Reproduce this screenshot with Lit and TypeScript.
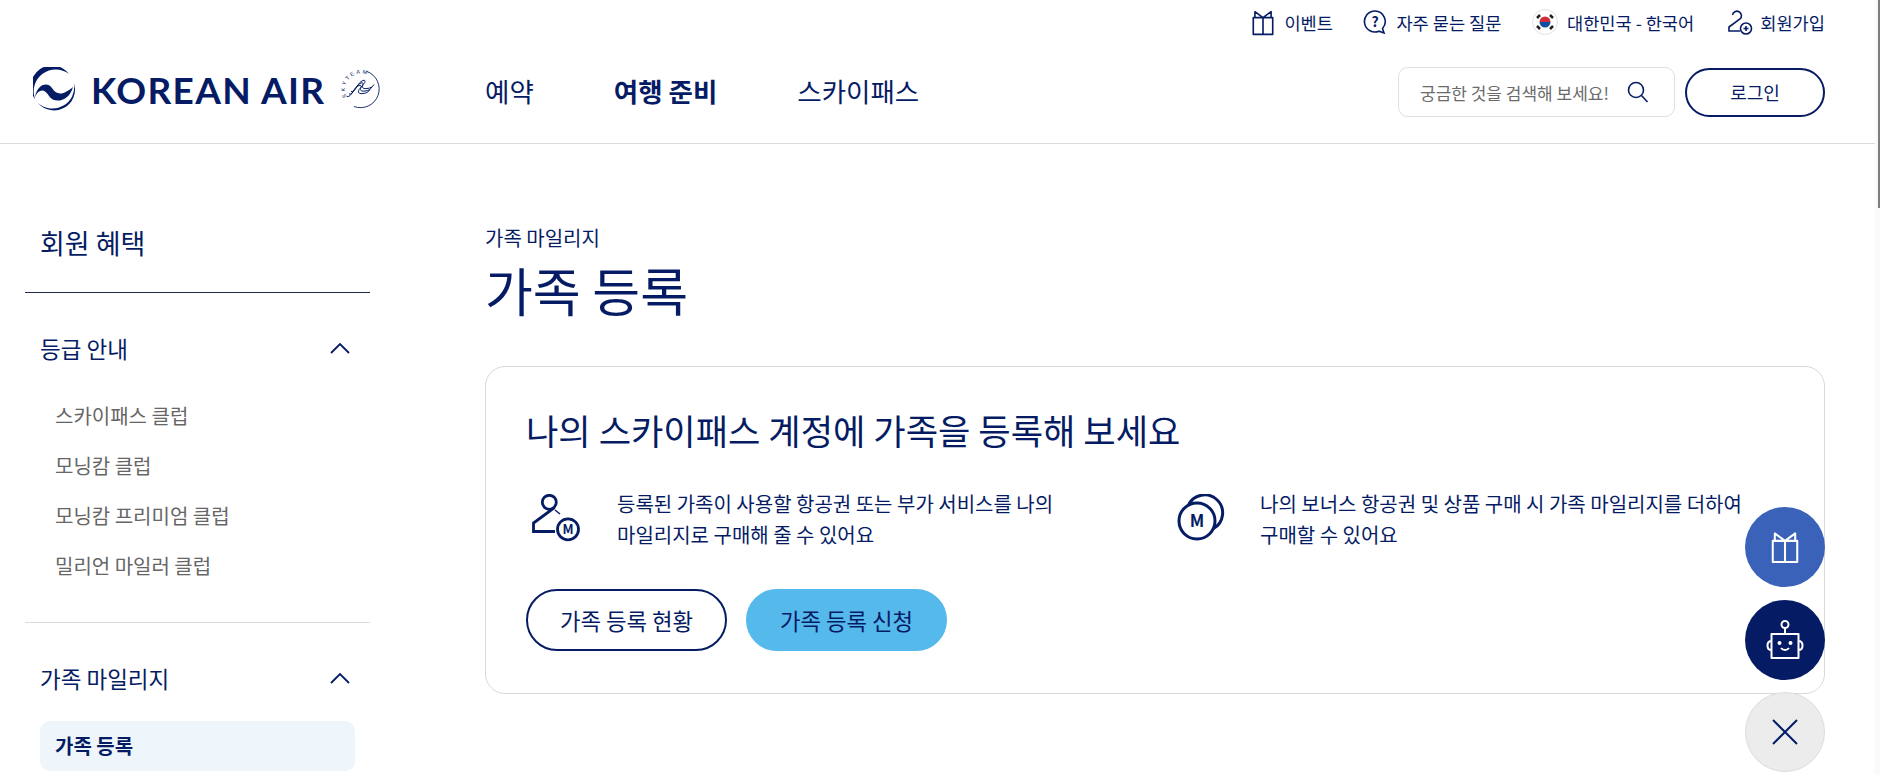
import { LitElement, html, css, svg } from 'lit';
import { customElement } from 'lit/decorators.js';

const NAVY = '#051c64';

const giftIcon = (color: string, w: number, h: number) => html`
  <svg width=${w} height=${h} viewBox="0 0 22 25" fill="none" stroke=${color} stroke-width="1.5" stroke-linejoin="round">
    <path d="M2 8h18v15.500H2zM11 8v15.500M3.500 8V2.500L11 8l7.500-5.500V8" />
  </svg>
`;

const chevron = html`
  <svg width="20" height="12" viewBox="0 0 20 12" fill="none" stroke=${NAVY} stroke-width="1.8">
    <path d="M1 11l9-9 9 9" />
  </svg>
`;

// the "2" shaped person used on the family feature
const familyPath = svg`
  <circle cx="17.300" cy="8.300" r="7" />
  <path d="M22.500 13.500 1.500 29v8.500H23" />
`;

const ribbon = svg`<path d="M9 26C14 27 15 17 21 15c2-1 3 1 1 3-2 2-3 6 3 5 3 0 6-2 7-4" stroke-width="1" />`;

@customElement('app-root')
export class AppRoot extends LitElement {
  static styles = css`
    :host {
      display: block;
      height: 775px;
      overflow: hidden;
      position: relative;
      background: #fff;
      color: #051c64;
      font-family: 'Noto Sans CJK KR', 'Noto Sans', sans-serif;
    }
    .scrollbar {
      position: absolute;
      top: 0;
      right: 0;
      width: 5px;
      height: 775px;
      background: #fafafa;
    }
    .thumb {
      position: absolute;
      top: 0;
      right: 0;
      width: 2px;
      height: 208px;
      background: #7d7d7d;
    }
    header {
      height: 143px;
      margin-right: 5px;
      border-bottom: 1px solid #dcdcdc;
      display: flex;
      flex-direction: column;
    }
    .util {
      height: 44px;
      display: flex;
      justify-content: flex-end;
      align-items: center;
      padding-right: 50px;
      gap: 33px;
      font-size: 17.6px;
    }
    .util a {
      display: flex;
      align-items: center;
      gap: 9px;
    }
    .util a.tight {
      margin-right: -2.500px;
    }
    .util a:last-child {
      gap: 7px;
    }
    .mainbar {
      flex: 1;
      display: flex;
      align-items: center;
      padding: 0 50px 0 33px;
      margin-top: -3px;
    }
    .logo {
      display: flex;
      align-items: center;
      width: 452px;
      margin-bottom: 6px;
    }
    .wordmark {
      font-family: Lato, sans-serif;
      font-weight: 700;
      font-size: 37px;
      letter-spacing: 1.300px;
      margin: 0 15px 0 16px;
      line-height: 1;
      color: #051c64;
      white-space: nowrap;
    }
    nav {
      display: flex;
      gap: 80px;
      font-size: 26.500px;
      flex: 1;
      margin-bottom: 4px;
    }
    nav b {
      font-weight: 700;
    }
    .search {
      width: 277px;
      height: 50px;
      box-sizing: border-box;
      border: 1px solid #dde0e6;
      border-radius: 10px;
      display: flex;
      align-items: center;
      justify-content: space-between;
      padding: 0 25px 0 21px;
      font-size: 17px;
      color: #6b6b6b;
    }
    .login {
      width: 140px;
      height: 49px;
      margin-left: 10px;
      box-sizing: border-box;
      border: 2px solid #051c64;
      border-radius: 25px;
      display: flex;
      align-items: center;
      justify-content: center;
      font-size: 18px;
    }
    .body {
      display: flex;
      padding: 0 55px 0 25px;
    }
    aside {
      width: 345px;
      flex: none;
      margin-right: 115px;
      padding-top: 69px;
    }
    .side-title {
      font-size: 27px;
      line-height: 60px;
      padding: 0 15px;
      border-bottom: 1px solid #222b45;
      height: 79px;
    }
    .group {
      padding: 25px 15px 0;
    }
    .group + .group {
      border-top: 1px solid #dcdcdc;
      margin-top: 31px;
    }
    .group-head {
      display: flex;
      justify-content: space-between;
      align-items: center;
      font-size: 22.500px;
      height: 60px;
      padding-right: 5px;
    }
    .sub {
      margin-top: 13px;
    }
    .sub div {
      height: 50px;
      line-height: 50px;
      padding-left: 15px;
      font-size: 20px;
      color: #666;
    }
    .sub .active {
      background: #eef6fc;
      border-radius: 10px;
      color: #051c64;
      font-weight: 700;
    }
    main {
      flex: 1;
      padding-top: 81px;
    }
    .crumb {
      font-size: 20px;
      line-height: 26px;
    }
    h1 {
      font-size: 52px;
      font-weight: 400;
      line-height: 70px;
      margin: 4px 0 41px;
    }
    .card {
      box-sizing: border-box;
      height: 328px;
      border: 1px solid #d9d9d9;
      border-radius: 20px;
      padding: 38px 40px 0;
    }
    h2 {
      font-size: 35.200px;
      font-weight: 400;
      line-height: 50px;
      margin: 0 0 33px;
    }
    .features {
      display: grid;
      grid-template-columns: 645px 1fr;
    }
    .feature {
      display: flex;
      gap: 35px;
      align-items: flex-start;
      font-size: 20px;
      line-height: 31px;
    }
    .feature svg {
      margin: 6px 0 0 6px;
      flex: none;
    }
    .actions {
      display: flex;
      gap: 19px;
      margin-top: 39px;
    }
    .btn {
      box-sizing: border-box;
      width: 201px;
      height: 62px;
      border-radius: 31px;
      border: 2px solid #051c64;
      display: flex;
      align-items: center;
      justify-content: center;
      font-size: 22.300px;
    }
    .btn.primary {
      background: #56b9ec;
      border-color: #56b9ec;
    }
    .float {
      position: absolute;
      left: 1745px;
      width: 80px;
      height: 80px;
      box-sizing: border-box;
      border-radius: 50%;
      display: flex;
      align-items: center;
      justify-content: center;
    }
    .f1 {
      top: 507px;
      background: #3a62b8;
    }
    .f2 {
      top: 600px;
      background: #051c64;
    }
    .f3 {
      top: 692px;
      background: #ececec;
      border: 1px solid #dcdcdc;
    }
  `;

  render() {
    return html`
      <header>
        <div class="util">
          <a class="tight">${giftIcon(NAVY, 24, 27)}<span>이벤트</span></a>
          <a class="tight">
            <svg width="24" height="26" viewBox="0 0 24 26" fill="none" stroke=${NAVY} stroke-width="1.6">
              <path d="M12 2a10.500 10.500 0 1 0 4 20.200l5 1.800-1.500-4.500A10.500 10.500 0 0 0 12 2z" />
              <text x="12" y="17.500" font-size="14" font-weight="700" text-anchor="middle" fill=${NAVY} stroke="none">?</text>
            </svg>
            <span>자주 묻는 질문</span>
          </a>
          <a>
            <svg width="26" height="26" viewBox="0 0 26 26">
              <circle cx="13" cy="13" r="12.500" fill="#fff" stroke="#e2e2e2" />
              <path d="M7.500 13a5.500 5.500 0 0 1 11 0z" fill="#cd2e3a" />
              <path d="M7.500 13a5.500 5.500 0 0 0 11 0z" fill="#0f4fa0" />
              <path d="M5 9l3-3M5 17l3 3M18 6l3 3M18 20l3-3" stroke="#222" stroke-width="2.500" />
            </svg>
            <span>대한민국 - 한국어</span>
          </a>
          <a>
            <svg width="26" height="26" viewBox="0 0 26 26" fill="none" stroke=${NAVY} stroke-width="1.6">
              <path d="M5.500 6A4.500 4.500 0 1 1 13 10L2 18v4h11" />
              <circle cx="19" cy="19.500" r="5.500" />
              <path d="M19 17v5M16.500 19.500h5" />
            </svg>
            <span>회원가입</span>
          </a>
        </div>
        <div class="mainbar">
          <div class="logo">
            <svg width="42" height="44" viewBox="0 0 42 44" fill=${NAVY}>
              <path d="M36 7A21 21 0 0 0 2 32A22 22 0 0 1 36 7z" />
              <path d="M5 36A21 21 0 0 0 41 16A21.800 21.800 0 0 1 5 36z" />
              <path d="M2 30C4 18 14 14 19 21 23 27 28 30 40 20 36 35 21 37 16 29 12 22 6 21 2 30z" />
            </svg>
            <span class="wordmark">KOREAN AIR</span>
            <svg width="42" height="42" viewBox="0 0 42 42" fill="none" stroke=${NAVY}>
              <path d="M27 3.500A18.500 18.500 0 0 1 14 38.500" stroke-width="0.9" />
              <path id="skyteam-arc" d="M7 29A16 16 0 0 1 34 12" stroke="none" />
              <text font-size="5.500" fill=${NAVY} stroke="none" font-family="Liberation Sans" letter-spacing="2">
                <textPath href="#skyteam-arc">SKYTEAM</textPath>
              </text>
              ${ribbon}
              <g transform="translate(-2 2.500)">${ribbon}</g>
              <g transform="translate(2 -2.500)">${ribbon}</g>
            </svg>
          </div>
          <nav>
            <span>예약</span>
            <b>여행 준비</b>
            <span>스카이패스</span>
          </nav>
          <div class="search">
            <span>궁금한 것을 검색해 보세요!</span>
            <svg width="22" height="22" viewBox="0 0 22 22" fill="none" stroke=${NAVY} stroke-width="1.6">
              <circle cx="9" cy="9" r="7.500" />
              <path d="M14.500 14.500l6 6.500" />
            </svg>
          </div>
          <div class="login">로그인</div>
        </div>
      </header>
      <div class="body">
        <aside>
          <div class="side-title">회원 혜택</div>
          <div class="group">
            <div class="group-head"><span>등급 안내</span>${chevron}</div>
            <div class="sub">
              <div>스카이패스 클럽</div>
              <div>모닝캄 클럽</div>
              <div>모닝캄 프리미엄 클럽</div>
              <div>밀리언 마일러 클럽</div>
            </div>
          </div>
          <div class="group">
            <div class="group-head"><span>가족 마일리지</span>${chevron}</div>
            <div class="sub"><div class="active">가족 등록</div></div>
          </div>
        </aside>
        <main>
          <div class="crumb">가족 마일리지</div>
          <h1>가족 등록</h1>
          <section class="card">
            <h2>나의 스카이패스 계정에 가족을 등록해 보세요</h2>
            <div class="features">
              <div class="feature">
                <svg width="50" height="50" viewBox="0 0 50 50" fill="none" stroke=${NAVY} stroke-width="2.800">
                  ${familyPath}
                  <path d="M23 16l5 4" stroke-width="1.500" />
                  <circle cx="36" cy="35.300" r="10.500" />
                  <text x="36" y="40" font-size="13" font-weight="700" text-anchor="middle" fill=${NAVY} stroke="none">M</text>
                </svg>
                <div>등록된 가족이 사용할 항공권 또는 부가 서비스를 나의<br />마일리지로 구매해 줄 수 있어요</div>
              </div>
              <div class="feature">
                <svg width="48" height="48" viewBox="0 0 48 48" fill="none" stroke=${NAVY} stroke-width="3">
                  <path d="M11.300 11.300A18 18 0 1 1 36.200 34.700" />
                  <circle cx="20" cy="27" r="18" />
                  <text x="20" y="33" font-size="17" font-weight="700" text-anchor="middle" fill=${NAVY} stroke="none">M</text>
                </svg>
                <div>나의 보너스 항공권 및 상품 구매 시 가족 마일리지를 더하여<br />구매할 수 있어요</div>
              </div>
            </div>
            <div class="actions">
              <div class="btn">가족 등록 현황</div>
              <div class="btn primary">가족 등록 신청</div>
            </div>
          </section>
        </main>
      </div>
      <div class="float f1">${giftIcon('#fff', 30, 34)}</div>
      <div class="float f2">
        <svg width="40" height="40" viewBox="0 0 40 40" fill="none" stroke="#fff" stroke-width="2">
          <circle cx="20" cy="4.500" r="3.500" />
          <path d="M20 8v6M6.500 14h27v24h-27zM6.500 21c-3 0-4 2-4 4.500S3.500 30 6.500 30M33.500 21c3 0 4 2 4 4.500s-1 4.500-4 4.500" stroke-linejoin="round" />
          <circle cx="14.500" cy="23" r="1" fill="#fff" />
          <circle cx="25.500" cy="23" r="1" fill="#fff" />
          <path d="M16 28c2 2.500 6 2.500 8 0" />
        </svg>
      </div>
      <div class="float f3">
        <svg width="26" height="26" viewBox="0 0 26 26" fill="none" stroke=${NAVY} stroke-width="2">
          <path d="M1 1l24 24M25 1 1 25" />
        </svg>
      </div>
      <div class="scrollbar"><div class="thumb"></div></div>
    `;
  }
}
